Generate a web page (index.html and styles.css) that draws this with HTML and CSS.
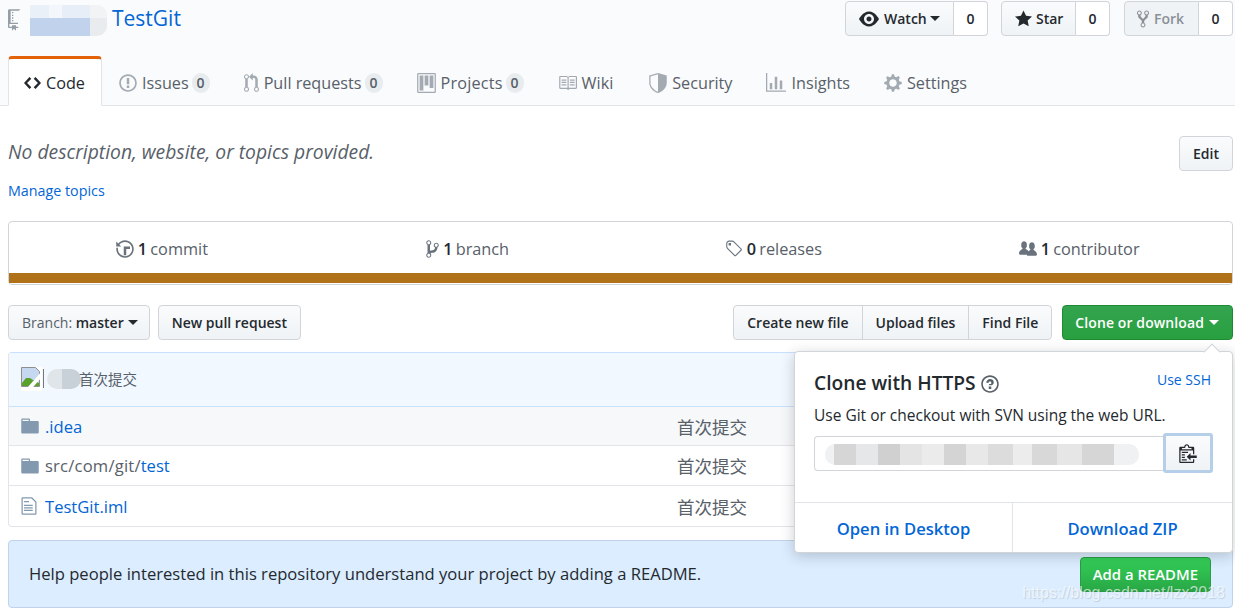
FILE: index.html
```html
<!DOCTYPE html>
<html lang="en">
<head>
  <meta charset="UTF-8" />
  <meta name="viewport" content="width=device-width, initial-scale=1" />
  <title>TestGit</title>
  <link rel="stylesheet" href="styles.css">
</head>
<body>
  <header class="repohead">
    <div class="repohead-top">
      <h1 class="repo-title">
        <svg class="icon icon-repo" viewBox="0 0 12 16"><path d="M4 9H3V8h1v1zm0-3H3v1h1V6zm0-2H3v1h1V4zm0-2H3v1h1V2zm8-1v12c0 .55-.45 1-1 1H6v2l-1.5-1.5L3 16v-2H1c-.55 0-1-.45-1-1V1c0-.55.45-1 1-1h10c.55 0 1 .45 1 1zm-1 10H1v2h2v-1h3v1h5v-2zm0-10H2v9h9V1z"/></svg>
        <span class="blur blur-owner"></span>
        <a href="#">TestGit</a>
      </h1>
      <ul class="pagehead-actions">
        <li class="btn-pair">
          <a class="btn btn-left btn-watch" href="#">
            <svg class="icon icon-eye" viewBox="0 0 16 16"><path d="M8.06 2C3 2 0 8 0 8s3 6 8.06 6C13 14 16 8 16 8s-3-6-7.94-6zM8 12c-2.2 0-4-1.78-4-4 0-2.2 1.8-4 4-4 2.22 0 4 1.8 4 4 0 2.22-1.78 4-4 4zm2-4c0 1.11-.89 2-2 2-1.11 0-2-.89-2-2 0-1.11.89-2 2-2 1.11 0 2 .89 2 2z"/></svg>
            Watch <span class="caret"></span>
          </a>
          <span class="social-count">0</span>
        </li>
        <li class="btn-pair">
          <a class="btn btn-left btn-star" href="#">
            <svg class="icon icon-star" viewBox="0 0 14 16"><path d="M14 6l-4.9-.64L7 1 4.9 5.36 0 6l3.6 3.26L2.67 14 7 11.67 11.33 14l-.93-4.74L14 6z"/></svg>
            Star
          </a>
          <span class="social-count">0</span>
        </li>
        <li class="btn-pair btn-pair-fork">
          <a class="btn btn-left btn-disabled" href="#">
            <svg class="icon icon-fork" viewBox="0 0 10 16"><path d="M8 1a1.993 1.993 0 00-1 3.72V6L5 8 3 6V4.72A1.993 1.993 0 002 1a1.993 1.993 0 00-1 3.72V6.5l3 3v1.78A1.993 1.993 0 005 15a1.993 1.993 0 001-3.72V9.5l3-3V4.72A1.993 1.993 0 008 1zM2 4.2C1.34 4.2.8 3.65.8 3c0-.65.55-1.2 1.2-1.2.65 0 1.2.55 1.2 1.2 0 .65-.55 1.2-1.2 1.2zm3 10c-.66 0-1.2-.55-1.2-1.2 0-.65.55-1.2 1.2-1.2.65 0 1.2.55 1.2 1.2 0 .65-.55 1.2-1.2 1.2zm3-10c-.66 0-1.2-.55-1.2-1.2 0-.65.55-1.2 1.2-1.2.65 0 1.2.55 1.2 1.2 0 .65-.55 1.2-1.2 1.2z"/></svg>
            Fork
          </a>
          <span class="social-count">0</span>
        </li>
      </ul>
    </div>
    <nav class="reponav">
      <a class="tab tab-selected" href="#">
        <svg class="icon icon-code" viewBox="0 0 14 16"><path d="M9.5 3L8 4.5 11.5 8 8 11.5 9.5 13 14 8 9.5 3zm-5 0L0 8l4.5 5L6 11.5 2.5 8 6 4.5 4.5 3z"/></svg>
        Code
      </a>
      <a class="tab" href="#">
        <svg class="icon icon-issue" viewBox="0 0 14 16"><path d="M7 2.3c3.14 0 5.7 2.56 5.7 5.7s-2.56 5.7-5.7 5.7A5.71 5.71 0 011.3 8c0-3.14 2.56-5.7 5.7-5.7zM7 1C3.14 1 0 4.14 0 8s3.14 7 7 7 7-3.14 7-7-3.14-7-7-7zm1 3H6v5h2V4zm0 6H6v2h2v-2z"/></svg>
        Issues <span class="counter">0</span>
      </a>
      <a class="tab" href="#">
        <svg class="icon icon-pr" viewBox="0 0 12 16"><path d="M11 11.28V5c-.03-.78-.34-1.47-.94-2.06C9.46 2.35 8.78 2.03 8 2H7V0L4 3l3 3V4h1c.27.02.48.11.69.31.21.2.3.42.31.69v6.28A1.993 1.993 0 0010 15a1.993 1.993 0 001-3.72zm-1 2.92c-.66 0-1.2-.55-1.2-1.2 0-.65.55-1.2 1.2-1.2.65 0 1.2.55 1.2 1.2 0 .65-.55 1.2-1.2 1.2zM4 3c0-1.11-.89-2-2-2a1.993 1.993 0 00-1 3.72v6.56A1.993 1.993 0 002 15a1.993 1.993 0 001-3.72V4.72c.59-.34 1-.98 1-1.72zm-.8 10c0 .66-.55 1.2-1.2 1.2-.65 0-1.2-.55-1.2-1.2 0-.65.55-1.2 1.2-1.2.65 0 1.2.55 1.2 1.2zM2 4.2C1.34 4.2.8 3.65.8 3c0-.65.55-1.2 1.2-1.2.65 0 1.2.55 1.2 1.2 0 .65-.55 1.2-1.2 1.2z"/></svg>
        Pull requests <span class="counter">0</span>
      </a>
      <a class="tab tab-projects" href="#">
        <svg class="icon icon-project" viewBox="0 0 15 16"><path d="M10 12h3V2h-3v10zm-4-2h3V2H6v8zm-4 4h3V2H2v12zm-1 1h13V1H1v14zM14 0H1a1 1 0 00-1 1v14a1 1 0 001 1h13a1 1 0 001-1V1a1 1 0 00-1-1z"/></svg>
        Projects <span class="counter">0</span>
      </a>
      <a class="tab tab-wiki" href="#">
        <svg class="icon icon-book" viewBox="0 0 16 16"><path d="M3 5h4v1H3V5zm0 3h4V7H3v1zm0 2h4V9H3v1zm11-5h-4v1h4V5zm0 2h-4v1h4V7zm0 2h-4v1h4V9zm2-6v9c0 .55-.45 1-1 1H9.5l-1 1-1-1H2c-.55 0-1-.45-1-1V3c0-.55.45-1 1-1h5.5l1 1 1-1H15c.55 0 1 .45 1 1zm-8 .5L7.5 3H2v9h6V3.5zm7-.5H9.5l-.5.5V12h6V3z"/></svg>
        Wiki
      </a>
      <a class="tab" href="#">
        <svg class="icon icon-shield" viewBox="0 0 14 16"><path d="M0 2l7-2 7 2v6.02C14 12.69 8.69 16 7 16c-1.69 0-7-3.31-7-7.98V2zm1 .75v5.27C1 11.9 5.8 14.9 7 14.9V1.05L1 2.75z"/></svg>
        Security
      </a>
      <a class="tab" href="#">
        <svg class="icon icon-graph" viewBox="0 0 16 16"><path d="M16 14v1H0V0h1v14h15zM5 13H3V8h2v5zm4 0H7V3h2v10zm4 0h-2V6h2v7z"/></svg>
        Insights
      </a>
      <a class="tab" href="#">
        <svg class="icon icon-gear" viewBox="0 0 14 16"><path d="M14 8.77v-1.6l-1.94-.64-.45-1.09.88-1.84-1.13-1.13-1.81.91-1.09-.45-.69-1.92h-1.6l-.63 1.94-1.11.45-1.84-.88-1.13 1.13.91 1.81-.45 1.09L0 7.23v1.59l1.94.64.45 1.09-.88 1.84 1.13 1.13 1.81-.91 1.09.45.69 1.92h1.59l.63-1.94 1.11-.45 1.84.88 1.13-1.13-.92-1.81.47-1.09L14 8.75v.02zM7 11c-1.66 0-3-1.34-3-3s1.34-3 3-3 3 1.34 3 3-1.34 3-3 3z"/></svg>
        Settings
      </a>
    </nav>
  </header>

  <main class="container">
    <section class="repo-meta">
      <div>
        <p class="description">No description, website, or topics provided.</p>
        <a class="manage-topics" href="#">Manage topics</a>
      </div>
      <a class="btn btn-edit" href="#">Edit</a>
    </section>

    <section class="summary">
      <ul class="numbers">
        <li>
          <svg class="icon icon-history" viewBox="0 0 14 16"><path d="M8 13H6V6h5v2H8v5zM7 1C4.81 1 2.87 2.02 1.59 3.59L0 2v4h4L2.5 4.5C3.55 3.17 5.17 2.3 7 2.3c3.14 0 5.7 2.56 5.7 5.7s-2.56 5.7-5.7 5.7A5.71 5.71 0 011.3 8c0-.34.03-.67.09-1H.08C.03 7.33 0 7.66 0 8c0 3.86 3.14 7 7 7s7-3.14 7-7-3.14-7-7-7z"/></svg>
          <span><b>1</b> commit</span>
        </li>
        <li>
          <svg class="icon icon-branch" viewBox="0 0 10 16"><path d="M10 5c0-1.11-.89-2-2-2a1.993 1.993 0 00-1 3.72v.3c-.02.52-.23.98-.63 1.38-.4.4-.86.61-1.38.63-.83.02-1.48.16-2 .45V4.72a1.993 1.993 0 00-1-3.72C.88 1 0 1.89 0 3a2 2 0 001 1.72v6.56c-.59.35-1 .99-1 1.72 0 1.11.89 2 2 2 1.11 0 2-.89 2-2 0-.53-.2-1-.53-1.36.09-.06.48-.41.59-.47.25-.11.56-.17.94-.17 1.05-.05 1.95-.45 2.75-1.25S8.95 7.77 9 6.73h-.02C9.59 6.37 10 5.73 10 5zM2 1.8c.66 0 1.2.55 1.2 1.2 0 .65-.55 1.2-1.2 1.2C1.35 4.2.8 3.65.8 3c0-.65.55-1.2 1.2-1.2zm0 12.41c-.66 0-1.2-.55-1.2-1.2 0-.65.55-1.2 1.2-1.2.65 0 1.2.55 1.2 1.2 0 .65-.55 1.2-1.2 1.2zm6-8c-.66 0-1.2-.55-1.2-1.2 0-.65.55-1.2 1.2-1.2.65 0 1.2.55 1.2 1.2 0 .65-.55 1.2-1.2 1.2z"/></svg>
          <span><b>1</b> branch</span>
        </li>
        <li>
          <svg class="icon icon-tag" viewBox="0 0 15 16"><path d="M7.73 1.73C7.26 1.26 6.62 1 5.96 1H3.5C2.13 1 1 2.13 1 3.5v2.47c0 .66.27 1.3.73 1.77l6.06 6.06c.39.39 1.02.39 1.41 0l4.59-4.59a.996.996 0 000-1.41L7.73 1.73zM2.38 7.09c-.31-.3-.47-.7-.47-1.13V3.5c0-.88.72-1.59 1.59-1.59h2.47c.42 0 .83.16 1.13.47l6.14 6.13-4.73 4.73-6.13-6.15zM3.01 3h2v2H3V3h.01z"/></svg>
          <span><b>0</b> releases</span>
        </li>
        <li>
          <svg class="icon icon-people" viewBox="0 0 16 16"><path d="M16 12.999c0 .439-.45 1-1 1H7.995c-.539 0-.994-.447-.995-.999H1c-.54 0-1-.561-1-1 0-2.634 3-4 3-4s.229-.409 0-1c-.841-.621-1.058-.59-1-3 .058-2.419 1.367-3 2.5-3s2.442.58 2.5 3c.058 2.41-.159 2.379-1 3-.229.59 0 1 0 1s1.549.711 2.42 2.088C9.196 9.369 10 8.999 10 8.999s.229-.409 0-1c-.841-.62-1.058-.59-1-3 .058-2.419 1.367-3 2.5-3s2.437.581 2.495 3c.059 2.41-.158 2.38-1 3-.229.59 0 1 0 1s3.005 1.366 3.005 4z"/></svg>
          <span><b>1</b> contributor</span>
        </li>
      </ul>
      <div class="language-bar"></div>
    </section>

    <section class="file-nav">
      <a class="btn btn-branch" href="#"><span class="muted">Branch:</span>&nbsp;master <span class="caret"></span></a>
      <a class="btn btn-newpr" href="#">New pull request</a>
      <div class="file-actions">
        <div class="btn-group">
          <a class="btn" href="#">Create new file</a>
          <a class="btn" href="#">Upload files</a>
          <a class="btn" href="#">Find File</a>
        </div>
        <a class="btn btn-primary" href="#">Clone or download <span class="caret"></span></a>
      </div>
    </section>

    <div class="file-wrap">
      <div class="commit-tease">
        <svg class="broken-img" viewBox="0 0 21 24">
          <rect width="21" height="24" fill="#fff"/>
          <path d="M.5.5h14l4 4v15H.5z" fill="#c5d8ef" stroke="#8f8f8f"/>
          <path d="M1 19v-3l4-5h4l3 2 6 3v3z" fill="#5aa02c"/>
          <path d="M6 24L21 7" stroke="#fff" stroke-width="4"/>
        </svg>
        <span class="broken-bar"></span>
        <span class="blur blur-author"></span>
        <a class="commit-msg" href="#">首次提交</a>
      </div>
      <table class="files">
        <tr class="row-hover">
          <td class="col-icon"><svg class="icon icon-dir" viewBox="0 0 14 16"><path d="M13 4H7V3c0-.66-.31-1-1-1H1c-.55 0-1 .45-1 1v10c0 .55.45 1 1 1h12c.55 0 1-.45 1-1V5c0-.55-.45-1-1-1zM6 4H1V3h5v1z"/></svg></td>
          <td class="col-name"><a href="#">.idea</a></td>
          <td class="col-msg">首次提交</td>
        </tr>
        <tr>
          <td class="col-icon"><svg class="icon icon-dir" viewBox="0 0 14 16"><path d="M13 4H7V3c0-.66-.31-1-1-1H1c-.55 0-1 .45-1 1v10c0 .55.45 1 1 1h12c.55 0 1-.45 1-1V5c0-.55-.45-1-1-1zM6 4H1V3h5v1z"/></svg></td>
          <td class="col-name"><span class="path">src/com/git/</span><a href="#">test</a></td>
          <td class="col-msg">首次提交</td>
        </tr>
        <tr>
          <td class="col-icon"><svg class="icon icon-file" viewBox="0 0 12 16"><path d="M6 5H2V4h4v1zM2 8h7V7H2v1zm0 2h7V9H2v1zm0 2h7v-1H2v1zm10-7.5V14c0 .55-.45 1-1 1H1c-.55 0-1-.45-1-1V2c0-.55.45-1 1-1h7.5L12 4.5zM11 5L8 2H1v12h10V5z"/></svg></td>
          <td class="col-name"><a href="#">TestGit.iml</a></td>
          <td class="col-msg">首次提交</td>
        </tr>
      </table>
    </div>

    <section class="readme-prompt">
      <span class="readme-text">Help people interested in this repository understand your project by adding a README.</span>
      <a class="btn btn-add" href="#">Add a README</a>
    </section>
  </main>

  <div class="clone-popover">
    <div class="clone-body">
      <a class="use-ssh" href="#">Use SSH</a>
      <h4>Clone with HTTPS
        <svg class="icon icon-question" viewBox="0 0 14 16"><path d="M6 10h2v2H6v-2zm4-3.5C10 8.64 8 9 8 9H6c0-.55.45-1 1-1h.5c.28 0 .5-.22.5-.5v-1c0-.28-.22-.5-.5-.5h-1c-.28 0-.5.22-.5.5V7H4c0-1.5 1.5-3 3-3s3 1 3 2.5zM7 2.3c3.14 0 5.7 2.56 5.7 5.7S10.14 13.7 7 13.7 1.3 11.14 1.3 8 3.86 2.3 7 2.3zM7 1C3.14 1 0 4.14 0 8s3.14 7 7 7 7-3.14 7-7-3.14-7-7-7z"/></svg>
      </h4>
      <p>Use Git or checkout with SVN using the web URL.</p>
      <div class="clone-url">
        <div class="url-field"><span class="blur blur-url"></span></div>
        <button class="copy-btn">
          <svg class="icon icon-clippy" viewBox="0 0 14 16"><path d="M2 13h4v1H2v-1zm5-6H2v1h5V7zm2 3V8l-3 3 3 3v-2h5v-2H9zM4.5 9H2v1h2.5V9zM2 12h2.5v-1H2v1zm9 1h1v2c-.02.28-.11.52-.3.7-.19.18-.42.28-.7.3H1c-.55 0-1-.45-1-1V4c0-.55.45-1 1-1h3c0-1.11.89-2 2-2 1.11 0 2 .89 2 2h3c.55 0 1 .45 1 1v5h-1V6H1v9h10v-2zM2 5h8c0-.55-.45-1-1-1H8c-.55 0-1-.45-1-1s-.45-1-1-1-1 .45-1 1-.45 1-1 1H3c-.55 0-1 .45-1 1z"/></svg>
        </button>
      </div>
    </div>
    <div class="clone-footer">
      <a href="#">Open in Desktop</a>
      <a href="#">Download ZIP</a>
    </div>
  </div>

  <div class="watermark">https://blog.csdn.net/lzx2018</div>
</body>
</html>
```

FILE: styles.css
```css
* {
  box-sizing: border-box;
}
html, body {
  height: 611px;
  overflow: hidden;
}
body {
  margin: 0;
  position: relative;
  background: #fff;
  color: #24292e;
  font-family: "Open Sans", "Noto Sans CJK SC", sans-serif;
  font-size: 15px;
}
a {
  color: #0366d6;
  text-decoration: none;
}
ul {
  list-style: none;
  margin: 0;
  padding: 0;
}
.icon {
  display: inline-block;
  fill: currentColor;
  fill-rule: evenodd;
  flex: none;
}
.caret {
  display: inline-block;
  width: 0;
  height: 0;
  border: 5px solid transparent;
  border-top-color: currentColor;
  border-bottom-width: 0;
  vertical-align: middle;
  margin-left: 1px;
}

/* blurred out bits */
.blur {
  display: inline-block;
}
.blur-owner {
  flex: none;
  width: 89px;
  height: 31px;
  margin: 1px 5px 0 -6px;
  border-radius: 10px;
  background: linear-gradient(90deg, #fafbfc 0 13%, #eaf0f8 13% 35%, #f3f6fa 35% 50%, #e8eef7 50% 81%, #f2f3f5 81% 100%) top / 100% 42% no-repeat,
    linear-gradient(90deg, #fafbfc 0 13%, #c0d2ec 13% 81%, #e9ecef 81% 100%);
}
.blur-author {
  width: 34px;
  height: 20px;
  border-radius: 10px;
  background: linear-gradient(90deg, #e0e5ea 0 45%, #c8d0d8 45% 100%);
}
.blur-url {
  width: 314px;
  height: 21px;
  border-radius: 10px;
  background: linear-gradient(90deg, #f0f1f3 0 3%, #d6d6d6 3% 10%, #e6e7e8 10% 17%, #d0d0d0 17% 24%, #e4e4e4 24% 31%, #ebebeb 31% 38%, #d4d4d4 38% 45%, #e8e8e8 45% 52%, #dcdcdc 52% 60%, #ececec 60% 66%, #d8d8d8 66% 74%, #e6e6e6 74% 82%, #d6d6d6 82% 92%, #f0f1f3 92% 100%);
}

/* buttons */
.btn {
  display: inline-flex;
  align-items: center;
  height: 35px;
  padding: 0 13px;
  border: 1px solid #d1d5da;
  border-radius: 4px;
  background: linear-gradient(#fafbfc, #eff3f6);
  color: #24292e;
  font-weight: 600;
  font-size: 14px;
  white-space: nowrap;
}
.btn-primary {
  padding: 0 13px 0 12px;
  gap: 4px;
  background: linear-gradient(#34a44f, #28a03f);
  border-color: #1f8a36;
  color: #fff;
  letter-spacing: 0.1px;
}

/* repo header */
.repohead {
  height: 106px;
  padding: 0 2px 0 8px;
  background: #fafbfc;
  border-bottom: 1px solid #e1e4e8;
}
.repohead-top {
  display: flex;
  justify-content: space-between;
  height: 56px;
  padding-top: 1px;
}
.repo-title {
  display: flex;
  align-items: flex-start;
  margin: 0;
  padding-top: 3px;
  font-size: 21px;
  font-weight: 400;
}
.icon-repo {
  width: 16px;
  height: 22px;
  margin-top: 5px;
  color: #959da5;
}
.pagehead-actions {
  display: flex;
  gap: 13px;
}
.btn-pair {
  display: flex;
}
.btn-pair-fork {
  margin-left: 1px;
}
.btn-left {
  border-radius: 4px 0 0 4px;
  gap: 5px;
}
.btn-star {
  width: 75px;
  padding: 0 0 0 13px;
  gap: 4px;
}
.btn-watch {
  width: 109px;
  padding: 0 0 0 13px;
}
.btn-watch .caret {
  margin-left: -2px;
}
.btn-disabled {
  width: 75px;
  padding: 0 0 0 12px;
  color: #8b9097;
  background: #eff3f6;
}
.social-count {
  display: flex;
  justify-content: center;
  align-items: center;
  width: 34px;
  height: 35px;
  border: 1px solid #d1d5da;
  border-left: 0;
  border-radius: 0 4px 4px 0;
  background: #fff;
  font-weight: 600;
  font-size: 14px;
}
.icon-eye {
  width: 20px;
  height: 20px;
}
.icon-star {
  width: 17px;
  height: 20px;
}
.icon-fork {
  width: 12px;
  height: 20px;
  color: #8b9097;
}

/* tabs */
.reponav {
  display: flex;
  height: 50px;
}
.tab {
  display: flex;
  align-items: center;
  gap: 5px;
  height: 50px;
  padding: 2px 16px 0;
  color: #586069;
  font-size: 16.2px;
  border: 1px solid transparent;
  border-top-width: 3px;
  border-radius: 4px 4px 0 0;
  white-space: nowrap;
}
.tab-projects {
  letter-spacing: 0.2px;
}
.tab-wiki {
  padding-right: 18px;
}
.tab .icon {
  height: 20px;
  color: #a3aab1;
}
.tab-selected {
  background: #fff;
  color: #24292e;
  border-color: #e36209 #e1e4e8 #fff;
}
.tab-selected .icon {
  color: #24292e;
}
.counter {
  min-width: 18px;
  margin-left: -2px;
  padding: 1px 4px;
  border-radius: 20px;
  background: #e9ecef;
  text-align: center;
  font-size: 14px;
  font-weight: 600;
  line-height: 18px;
}
.icon-code { width: 17px; margin-left: -1px; }
.icon-issue { width: 18px; }
.icon-pr { width: 15px; }
.icon-project { width: 19px; }
.icon-book { width: 19px; }
.icon-shield { width: 18px; }
.icon-graph { width: 20px; }
.icon-gear { width: 18px; }

/* page body */
.container {
  padding: 0 2px 0 8px;
}
.repo-meta {
  display: flex;
  justify-content: space-between;
  align-items: flex-start;
  height: 115px;
  padding-top: 30px;
}
.description {
  margin: 0 0 12px;
  font-size: 19.3px;
  font-style: italic;
  color: #586069;
  line-height: 32px;
}
.manage-topics {
  font-size: 14.3px;
}
.btn-edit {
  font-size: 14px;
}

.summary {
  height: 64px;
  border: 1px solid #d1d5da;
  border-radius: 4px;
}
.numbers {
  display: grid;
  grid-template-columns: repeat(4, 1fr);
  height: 51px;
  padding-top: 2px;
}
.numbers li {
  display: flex;
  justify-content: center;
  align-items: center;
  gap: 4px;
  color: #586069;
  font-size: 16.3px;
  word-spacing: -1px;
}
.numbers b {
  color: #24292e;
  font-weight: 600;
}
.numbers .icon {
  height: 20px;
  width: 18px;
  color: #6a737d;
}
.numbers .icon-branch {
  width: 13px;
}
.language-bar {
  height: 10px;
  background: #b07219;
}

.file-nav {
  display: flex;
  gap: 8px;
  margin-top: 20px;
}
.btn-branch {
  padding-right: 11px;
}
.btn-branch .muted {
  color: #586069;
  font-weight: 400;
}
.btn-branch .caret {
  margin-left: 4px;
}
.file-actions {
  margin-left: auto;
  display: flex;
  gap: 10px;
}
.btn-group {
  display: flex;
}
.btn-group .btn {
  border-radius: 0;
  margin-left: -1px;
}
.btn-group .btn:first-child {
  border-radius: 4px 0 0 4px;
  margin-left: 0;
}
.btn-group .btn:last-child {
  border-radius: 0 4px 4px 0;
}

.file-wrap {
  margin-top: 12px;
  border: 1px solid #e1e4e8;
  border-top-color: #c8e1ff;
  border-radius: 4px;
  overflow: hidden;
}
.commit-tease {
  display: flex;
  align-items: center;
  height: 54px;
  padding: 0 0 2px 12px;
  background: #f1f8ff;
  border-bottom: 1px solid #c8e1ff;
  font-size: 14.5px;
}
.broken-img {
  width: 21px;
  height: 24px;
}
.broken-bar {
  width: 1px;
  height: 19px;
  background: #777;
  margin-left: 1px;
}
.blur-author {
  margin-left: 3px;
}
.commit-msg {
  margin-left: -2px;
  color: #586069;
}
.files {
  width: 100%;
  border-collapse: separate;
  border-spacing: 0;
  table-layout: fixed;
}
.files td {
  height: 40px;
  border-bottom: 1px solid #e1e4e8;
  font-size: 16.6px;
  padding: 0;
}
.files tr:first-child td {
  height: 39px;
}
.files tr:last-child td {
  border-bottom: 0;
}
.row-hover {
  background: #f6f8fa;
}
.files .col-icon {
  width: 36px;
  padding-left: 12px;
}
.col-name {
  width: 632px;
}
.path {
  color: #586069;
  letter-spacing: 0.2px;
}
.files .col-msg {
  color: #586069;
  font-size: 17.5px;
}
.icon-dir {
  display: block;
  width: 18px;
  height: 20px;
  color: #8399b0;
}
.icon-file {
  display: block;
  width: 16px;
  height: 20px;
  color: #8399b0;
}

.readme-prompt {
  display: flex;
  justify-content: space-between;
  align-items: center;
  height: 68px;
  margin-top: 13px;
  padding: 0 21px 0 20px;
  background: #dbedff;
  border: 1px solid #c0d3eb;
  border-radius: 4px;
  font-size: 16.6px;
}
.readme-text {
  margin-bottom: 2px;
}
.btn-add {
  padding: 0 12px;
  background: linear-gradient(#34d058, #28a745);
  border-color: #2a9c46;
  color: #fff;
  font-weight: 600;
  font-size: 14.9px;
}

/* clone dropdown */
.clone-popover {
  position: absolute;
  left: 794px;
  top: 351px;
  width: 439px;
  height: 202px;
  background: #fff;
  border: 1px solid #d1d5da;
  border-radius: 4px;
  box-shadow: 0 3px 14px rgba(27, 31, 35, 0.22);
}
.clone-popover::before {
  content: "";
  position: absolute;
  right: 14px;
  top: -6px;
  width: 11px;
  height: 11px;
  background: #fff;
  border-left: 1px solid #d1d5da;
  border-top: 1px solid #d1d5da;
  transform: rotate(45deg);
}
.clone-body {
  position: relative;
  height: 150px;
  padding: 16px 21px 0 19px;
}
.use-ssh {
  float: right;
  font-size: 14px;
  margin-top: 2px;
}
.clone-body h4 {
  margin: 0;
  font-size: 19.2px;
  font-weight: 600;
  line-height: 30px;
}
.icon-question {
  width: 18px;
  height: 20px;
  vertical-align: -4px;
  color: #586069;
}
.clone-body p {
  margin: 6px 0 10px;
  font-size: 15.5px;
  line-height: 22px;
  white-space: nowrap;
}
.clone-url {
  display: flex;
  height: 35px;
}
.url-field {
  width: 351px;
  flex: none;
  padding: 7px 10px 0;
  border: 1px solid #d1d5da;
  border-right: 0;
  border-radius: 4px 0 0 4px;
}
.copy-btn {
  flex: none;
  width: 50px;
  height: 40px;
  margin: -3px 0 0 -2px;
  padding: 0;
  border: 3px solid #b5cfe9;
  border-radius: 3px;
  background: linear-gradient(#fafbfc, #eff3f6);
  color: #24292e;
}
.icon-clippy {
  width: 18px;
  height: 20px;
  vertical-align: middle;
}
.clone-footer {
  display: grid;
  grid-template-columns: 218px 1fr;
  height: 50px;
  border-top: 1px solid #e1e4e8;
}
.clone-footer a {
  display: flex;
  justify-content: center;
  align-items: center;
  padding-top: 1px;
  font-weight: 600;
  font-size: 16.6px;
}
.clone-footer a:first-child {
  border-right: 1px solid #e1e4e8;
}

.watermark {
  position: absolute;
  right: 10px;
  top: 584px;
  color: rgba(255, 255, 255, 0.65);
  font-family: "Liberation Sans", sans-serif;
  font-size: 16px;
  text-shadow: 1px 1px 1px rgba(0, 0, 0, 0.12);
}
```
